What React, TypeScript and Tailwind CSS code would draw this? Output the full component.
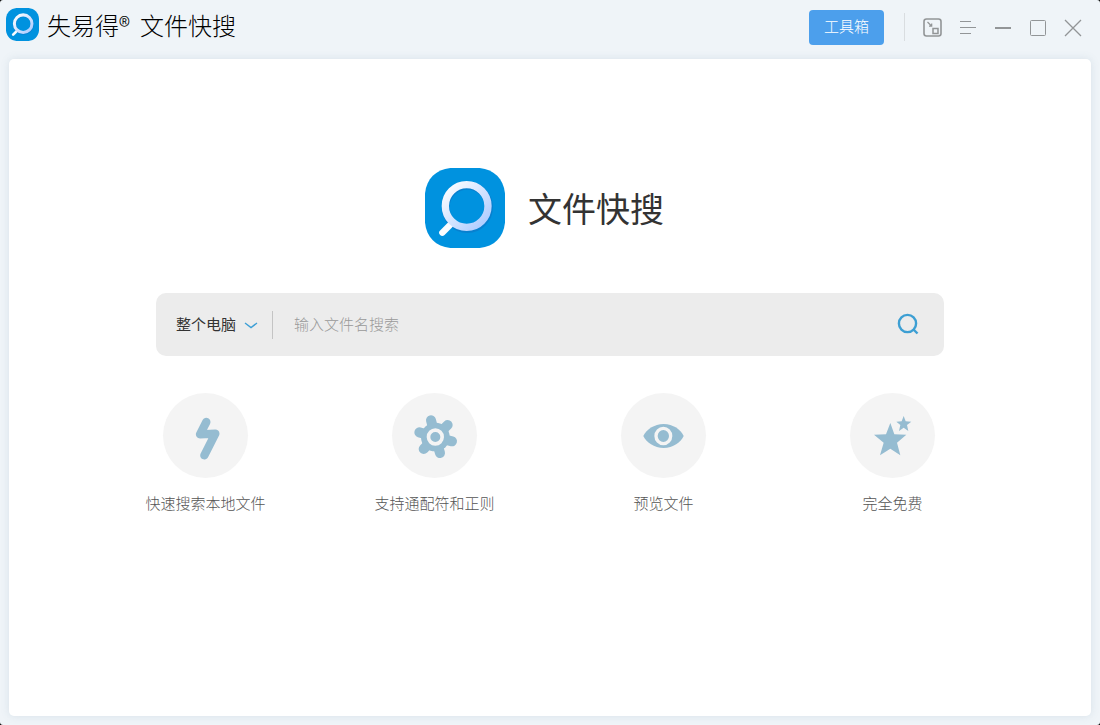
import React, { useId } from "react";

function Logo({ className }: { className: string }) {
  const id = useId();
  return (
    <svg viewBox="0 0 240 240" className={className} aria-hidden="true">
      <defs>
        <linearGradient id={id} x1="0" y1="0" x2="1" y2="1">
          <stop offset="0" stopColor="#ffffff" />
          <stop offset="1" stopColor="#a9c9ff" />
        </linearGradient>
      </defs>
      <path d="M76 0H164C208 5 235 32 240 76V164C235 208 208 235 164 240H76C32 235 5 208 0 164V76C5 32 32 5 76 0Z" fill="#0092df" />
      <circle cx="127" cy="118" r="65" fill="none" stroke="#0780cf" strokeWidth="24" />
      <path d="M52 194L78 168" stroke="#fafcff" strokeWidth="19" strokeLinecap="round" />
      <circle cx="125" cy="114" r="64" fill="none" stroke={`url(#${id})`} strokeWidth="22" />
    </svg>
  );
}

function WindowButton({ label, children }: { label: string; children: React.ReactNode }) {
  return (
    <button type="button" aria-label={label} className="flex h-9 w-[35px] items-center justify-center text-[#929597]">
      <svg viewBox="0 0 20 20" className="size-5" fill="none" stroke="currentColor" aria-hidden="true">
        {children}
      </svg>
    </button>
  );
}

const features = [
  {
    label: "快速搜索本地文件",
    icon: (
      <path
        d="M130 87L111 124L157 122L124 187"
        fill="none"
        stroke="#95bcd1"
        strokeWidth="25"
        strokeLinecap="round"
        strokeLinejoin="round"
      />
    ),
  },
  {
    label: "支持通配符和正则",
    icon: (
      <g fill="#95bcd1">
        <circle cx="130" cy="132" r="43" />
        <path
          d="M117 82L130 132L167 96M180 145L130 132L144 180M95 168L130 132L82 118"
          fill="none"
          stroke="#95bcd1"
          strokeWidth="30"
          strokeLinecap="round"
        />
        <circle cx="130" cy="132" r="20.5" stroke="#f4f4f4" strokeWidth="11" />
      </g>
    ),
  },
  {
    label: "预览文件",
    icon: (
      <g fill="#95bcd1">
        <path d="M67 129C75 110 100 93 128 93C156 93 180 110 188 129C180 148 156 165 128 165C100 165 75 148 67 129Z" />
        <ellipse cx="127" cy="129" rx="22" ry="23" stroke="#f4f4f4" strokeWidth="10" />
      </g>
    ),
  },
  {
    label: "完全免费",
    icon: (
      <g fill="#95bcd1">
        <path d="M121 90L133 124L169 125L141 149L151 187L121 167L90 187L101 149L72 125L108 124Z" />
        <path d="M161 69L167 85L184 86L171 96L175 114L161 104L147 114L151 96L139 86L155 85Z" />
      </g>
    ),
  },
];

export default function App() {
  return (
    <div className="bg-black">
      <div className="flex min-h-screen flex-col rounded-[3px] bg-[#eff4f8] px-[9px] pb-[9px] font-['Noto_Sans_CJK_SC','Noto_Sans',sans-serif] font-light">
        <header className="-ml-[3px] flex h-[59px] items-start">
          <Logo className="mt-2 size-[33px]" />
          <h1 className="ml-2 mt-[7px] text-2xl leading-9 text-black">
            失易得® <span className="ml-[5px]">文件快搜</span>
          </h1>
          <div className="ml-auto flex items-start pr-px pt-[10px]">
            <button type="button" className="h-[35px] w-[75px] rounded-[4px] bg-[#4c9fec] pb-0.5 text-[15px] text-white">
              工具箱
            </button>
            <div className="ml-5 mr-[10px] mt-[3px] h-7 w-px bg-[#d9dde0]" />
            <WindowButton label="迷你模式">
              <rect x="1" y="1" width="17" height="17" rx="2.5" strokeWidth="1.6" />
              <path d="M4.5 4L8.5 8M6 8.2H8.7V5.5" strokeWidth="1.2" />
              <rect x="10" y="10.5" width="5" height="5" strokeWidth="1.5" />
            </WindowButton>
            <WindowButton label="菜单">
              <path d="M2 3.5H13M2 9.5H18M2 15.5H13" />
            </WindowButton>
            <WindowButton label="最小化">
              <path d="M2 10H18" strokeWidth="2" />
            </WindowButton>
            <WindowButton label="最大化">
              <rect x="2.5" y="2.5" width="15" height="15" rx="1" />
            </WindowButton>
            <WindowButton label="关闭">
              <path d="M2 2L18 18M18 2L2 18" strokeWidth="1.3" />
            </WindowButton>
          </div>
        </header>

        <main className="flex grow flex-col items-center rounded-[5px] bg-white px-6 pt-[109px] shadow-[0_0_8px_rgba(90,120,150,0.15)]">
          <div className="flex items-center gap-[23px] pr-[11px]">
            <Logo className="size-20" />
            <h2 className="text-[34px] font-normal leading-[50px] text-[#333333]">文件快搜</h2>
          </div>

          <form
            role="search"
            onSubmit={(e) => e.preventDefault()}
            className="mt-[45px] flex h-[63px] w-full max-w-[788px] items-center rounded-[10px] bg-[#ececec] pl-5 pr-[18px] text-[15px]"
          >
            <div className="relative">
              <select aria-label="搜索范围" className="w-[84px] appearance-none bg-transparent font-normal text-[#333333] outline-none">
                <option>整个电脑</option>
              </select>
              <svg
                viewBox="0 0 14 8"
                className="pointer-events-none absolute inset-y-0 right-0.5 my-auto h-2 w-3.5"
                fill="none"
                stroke="#3d9fd6"
                strokeWidth="1.4"
                aria-hidden="true"
              >
                <path d="M1 2L7 6.5L13 2" />
              </svg>
            </div>
            <div className="ml-3 h-7 w-px bg-[#c4c4c4]" />
            <input
              type="text"
              aria-label="文件名"
              placeholder="输入文件名搜索"
              className="ml-[21px] min-w-0 grow bg-transparent text-[#333333] outline-none placeholder:text-[#999999]"
            />
            <button type="submit" aria-label="搜索" className="flex size-9 items-center justify-center pb-0.5">
              <svg viewBox="0 0 22 22" className="size-[22px]" fill="none" stroke="#3d9fd3" strokeWidth="2.4" aria-hidden="true">
                <circle cx="10.5" cy="10.5" r="8.6" />
                <path d="M16.5 16.5L20.5 20.5" />
              </svg>
            </button>
          </form>

          <ul className="mt-[37px] grid w-full max-w-[918px] grid-cols-4 pr-0.5">
            {features.map((f) => (
              <li key={f.label} className="flex flex-col items-center">
                <svg viewBox="0 0 255 255" className="size-[85px] rounded-full bg-[#f4f4f4]" aria-hidden="true">
                  {f.icon}
                </svg>
                <p className="mt-[13px] text-[15px] leading-6 text-[#555555]">{f.label}</p>
              </li>
            ))}
          </ul>
        </main>
      </div>
    </div>
  );
}
